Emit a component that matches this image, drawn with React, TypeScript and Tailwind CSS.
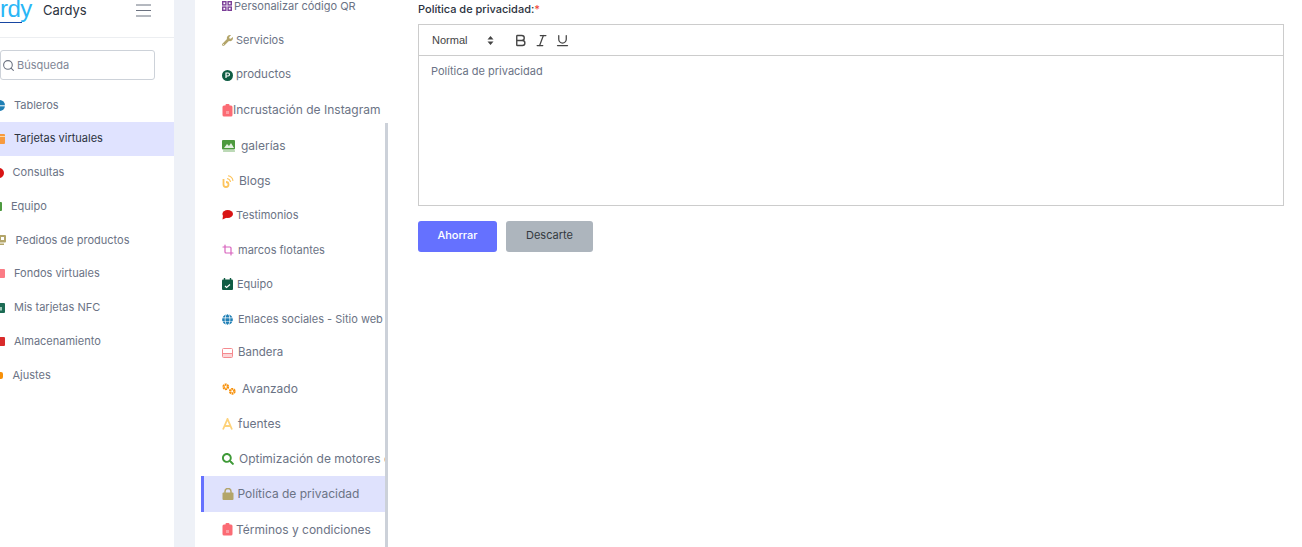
import { Search, Crop, Bold, Italic, Underline } from 'lucide-react'
import { FaGlobe, FaSearch, FaWrench } from 'react-icons/fa'
import type { ReactNode } from 'react'

const FONT = "font-['Inter','Open_Sans',sans-serif]"

const MAIN_NAV: { label: string; icon: ReactNode; iconBox: string; textGap: string; rowH: string; active?: boolean }[] = [
  {
    label: 'Tableros',
    icon: (
      <svg width="11" height="11" viewBox="0 0 11 11" className="shrink-0">
        <circle cx="5.5" cy="5.5" r="5.5" fill="#1f7fb5" />
        <path d="M0 5.8h11" stroke="#fff" strokeWidth="1" />
      </svg>
    ),
    iconBox: 'w-[5px]',
    textGap: 'ml-[9px]',
    rowH: 'h-[33px]',
  },
  {
    label: 'Tarjetas virtuales',
    icon: (
      <svg width="11" height="11" viewBox="0 0 11 11" className="shrink-0">
        <rect y="1" width="11" height="10" rx="1" fill="#f79a3e" />
        <path d="M0 3.5h11" stroke="#fdd9a8" strokeWidth="1" />
      </svg>
    ),
    iconBox: 'w-[5px]',
    textGap: 'ml-[9px]',
    rowH: 'h-[34px]',
    active: true,
  },
  {
    label: 'Consultas',
    icon: <span className="block h-[10px] w-[10px] shrink-0 rounded-full bg-[#d91414]" />,
    iconBox: 'w-[4px]',
    textGap: 'ml-[8.5px]',
    rowH: 'h-[34px]',
  },
  {
    label: 'Equipo',
    icon: <span className="block h-[9px] w-[9px] shrink-0 rounded-[1px] bg-[#4d9a3f]" />,
    iconBox: 'w-[2px]',
    textGap: 'ml-[9px]',
    rowH: 'h-[34px]',
  },
  {
    label: 'Pedidos de productos',
    icon: (
      <svg width="13" height="10" viewBox="0 0 13 10" className="shrink-0">
        <rect width="13" height="7.5" rx="1" fill="#b3a56a" />
        <rect x="8" y="2" width="3" height="3" fill="#fff" />
        <rect x="1" y="8.5" width="10" height="1.5" fill="#b3a56a" />
      </svg>
    ),
    iconBox: 'w-[6px]',
    textGap: 'ml-[9.5px]',
    rowH: 'h-[33px]',
  },
  {
    label: 'Fondos virtuales',
    icon: <span className="block h-[9px] w-[10px] shrink-0 rounded-[1px] bg-[#fb7c85]" />,
    iconBox: 'w-[5px]',
    textGap: 'ml-[9px]',
    rowH: 'h-[34px]',
  },
  {
    label: 'Mis tarjetas NFC',
    icon: (
      <svg width="11" height="10" viewBox="0 0 11 10" className="shrink-0">
        <rect width="11" height="10" rx="1" fill="#1c6b54" />
        <rect x="3" y="4" width="5" height="3.5" fill="#9cc9b8" />
      </svg>
    ),
    iconBox: 'w-[5px]',
    textGap: 'ml-[9px]',
    rowH: 'h-[34px]',
  },
  {
    label: 'Almacenamiento',
    icon: (
      <svg width="11" height="9" viewBox="0 0 11 9" className="shrink-0">
        <rect width="11" height="9" rx="1" fill="#d92b2b" />
        <rect x="2" y="3" width="3" height="2" fill="#fff" />
      </svg>
    ),
    iconBox: 'w-[5px]',
    textGap: 'ml-[9px]',
    rowH: 'h-[34px]',
  },
  {
    label: 'Ajustes',
    icon: <span className="block h-[7px] w-[7px] shrink-0 rounded-[2px] bg-[#f79009]" />,
    iconBox: 'w-[3px]',
    textGap: 'ml-[9.5px]',
    rowH: 'h-[34px]',
  },
]

function ClipIcon() {
  return (
    <svg width="11" height="13" viewBox="0 0 11 13" className="shrink-0">
      <rect x="0.5" y="1.5" width="10" height="11" rx="1.5" fill="#fb6b74" />
      <rect x="3.5" y="0" width="4" height="3" rx="1" fill="#fb6b74" />
      <rect x="4" y="7" width="3" height="3" fill="#fff" opacity="0.35" />
    </svg>
  )
}

const SUB_NAV: { label: string; icon: ReactNode; box: string; h: string; size: string; active?: boolean }[] = [
  {
    label: 'Personalizar código QR',
    icon: (
      <svg width="10" height="10" viewBox="0 0 10 10" className="shrink-0" fill="none" stroke="#7b3f98" strokeWidth="1.4">
        <rect x="0.7" y="0.7" width="3.2" height="3.2" />
        <rect x="6.1" y="0.7" width="3.2" height="3.2" />
        <rect x="0.7" y="6.1" width="3.2" height="3.2" />
        <rect x="6.1" y="6.1" width="3.2" height="3.2" />
      </svg>
    ),
    box: 'w-[12px]',
    h: 'h-[34px]',
    size: 'text-[11px]',
  },
  {
    label: 'Servicios',
    icon: <FaWrench size={11} color="#b3a56a" className="shrink-0" />,
    box: 'w-[14px]',
    h: 'h-[34px]',
    size: 'text-[11px]',
  },
  {
    label: 'productos',
    icon: (
      <svg width="11" height="11" viewBox="0 0 11 11" className="shrink-0">
        <circle cx="5.5" cy="5.5" r="5.5" fill="#0f5c43" />
        <path d="M4 8V3h2a1.5 1.5 0 0 1 0 3H4" stroke="#fff" strokeWidth="1.2" fill="none" />
      </svg>
    ),
    box: 'w-[14px]',
    h: 'h-[36px]',
    size: 'text-[11.5px]',
  },
  { label: 'Incrustación de Instagram', icon: <ClipIcon />, box: 'w-[11px]', h: 'h-[34px]', size: 'text-[12px]' },
  {
    label: 'galerías',
    icon: (
      <svg width="14" height="12" viewBox="0 0 14 12" className="shrink-0">
        <rect y="0" width="13" height="9.5" rx="1" fill="#4d9a3f" />
        <path d="M2 8l3-4 2 2 2-3 3 5z" fill="#fff" opacity="0.85" />
        <rect x="1" y="10.3" width="12" height="1.5" rx="0.5" fill="#a6cd9f" />
      </svg>
    ),
    box: 'w-[19px]',
    h: 'h-[38px]',
    size: 'text-[12px]',
  },
  {
    label: 'Blogs',
    icon: (
      <svg width="12" height="13" viewBox="0 0 12 13" className="shrink-0" fill="none" stroke="#fdc45c">
        <path d="M1.5 4v5.5a2.5 2.5 0 1 0 2.5-2.5" strokeWidth="1.8" />
        <path d="M5 3.5a4 4 0 0 1 3.5 3.5" strokeWidth="1.1" />
        <path d="M6 0.8a6 6 0 0 1 5 5" strokeWidth="1.1" />
      </svg>
    ),
    box: 'w-[17px]',
    h: 'h-[32px]',
    size: 'text-[12px]',
  },
  {
    label: 'Testimonios',
    icon: (
      <svg width="11" height="10" viewBox="0 0 11 10" className="shrink-0">
        <ellipse cx="5.7" cy="4" rx="5.3" ry="4" fill="#d91414" />
        <path d="M1 5.5L0.5 9.5 5 7.5z" fill="#d91414" />
      </svg>
    ),
    box: 'w-[14px]',
    h: 'h-[36px]',
    size: 'text-[11px]',
  },
  {
    label: 'marcos flotantes',
    icon: <Crop size={12} strokeWidth={2.4} className="shrink-0 text-[#d863bd]" />,
    box: 'w-[16px]',
    h: 'h-[34px]',
    size: 'text-[11px]',
  },
  {
    label: 'Equipo',
    icon: (
      <svg width="11" height="12" viewBox="0 0 11 12" className="shrink-0">
        <rect y="1.5" width="11" height="10.5" rx="1" fill="#0f5c43" />
        <path d="M2.5 0v3M8.5 0v3" stroke="#0f5c43" strokeWidth="1.4" />
        <path d="M3 8l1.6 1.4L8 6.5" stroke="#fff" strokeWidth="1.2" fill="none" />
      </svg>
    ),
    box: 'w-[15px]',
    h: 'h-[34px]',
    size: 'text-[11px]',
  },
  {
    label: 'Enlaces sociales - Sitio web',
    icon: <FaGlobe size={11} color="#1f7fb5" className="shrink-0" />,
    box: 'w-[16px]',
    h: 'h-[36px]',
    size: 'text-[11px]',
  },
  {
    label: 'Bandera',
    icon: (
      <svg width="11" height="10" viewBox="0 0 11 10" className="shrink-0">
        <rect x="0.5" y="0.5" width="10" height="9" rx="1" fill="none" stroke="#f58a8f" />
        <rect x="1" y="5" width="9" height="4" fill="#fbd5d7" />
        <rect x="1" y="5" width="9" height="1" fill="#f58a8f" />
      </svg>
    ),
    box: 'w-[16px]',
    h: 'h-[32px]',
    size: 'text-[11.5px]',
  },
  {
    label: 'Avanzado',
    icon: (
      <svg width="14" height="12" viewBox="0 0 14 12" className="shrink-0">
        <circle cx="3.8" cy="3.8" r="2.2" fill="none" stroke="#f79009" strokeWidth="2.4" strokeDasharray="1.6 0.5" />
        <circle cx="10.3" cy="8.3" r="2.2" fill="none" stroke="#f79009" strokeWidth="2.4" strokeDasharray="1.6 0.5" />
      </svg>
    ),
    box: 'w-[20px]',
    h: 'h-[40px]',
    size: 'text-[12px]',
  },
  {
    label: 'fuentes',
    icon: (
      <svg width="11" height="12" viewBox="0 0 11 12" className="shrink-0">
        <path d="M1 11.5L5.5 1 10 11.5M3 8h5" stroke="#fdd27a" strokeWidth="1.8" fill="none" />
      </svg>
    ),
    box: 'w-[16px]',
    h: 'h-[30px]',
    size: 'text-[12px]',
  },
  {
    label: 'Optimización de motores de búsqueda',
    icon: <FaSearch size={12} color="#3f9a38" className="shrink-0" />,
    box: 'w-[17px]',
    h: 'h-[37px] pt-[2px]',
    size: 'text-[12px]',
  },
  {
    label: 'Política de privacidad',
    icon: (
      <svg width="12" height="12" viewBox="0 0 12 12" className="shrink-0">
        <path d="M3 5V3.5a3 3 0 0 1 6 0V5" stroke="#b3a56a" strokeWidth="1.5" fill="none" />
        <rect x="0.5" y="4.5" width="11" height="7.5" rx="1" fill="#b3a56a" />
      </svg>
    ),
    box: 'w-[15.5px]',
    h: 'h-[36px]',
    size: 'text-[12px]',
    active: true,
  },
  { label: 'Términos y condiciones', icon: <ClipIcon />, box: 'w-[14px]', h: 'h-[35px]', size: 'text-[12px]' },
]

export default function App() {
  return (
    <div className={`flex h-[547px] w-[1302px] overflow-hidden bg-white ${FONT}`}>
      <aside className="w-[174px] shrink-0 overflow-hidden">
        <div className="flex h-[38px] items-start border-b border-[#eceef1]">
          <div className="h-[37px] w-[43px] shrink-0 overflow-hidden">
            <div className="h-[23px] w-[22px] whitespace-nowrap border-b border-[#1746a2] font-['Liberation_Sans',sans-serif] text-[24px] leading-[18px] tracking-[-0.5px] text-[#29b6f6]">
              rdy
            </div>
          </div>
          <span className="text-[13px] leading-[20px] text-[#2b3240]">Cardys</span>
          <svg width="15" height="13" viewBox="0 0 15 13" className="ml-[49px] mt-[4px] shrink-0" stroke="#6b7280" strokeWidth="1">
            <path d="M0 1h15M0 6.5h15M0 12h15" />
          </svg>
        </div>
        <div className="mt-[12px] flex h-[30px] w-[155px] items-center rounded-[3px] border border-[#cdd2d9]">
          <Search size={13} className="ml-[1px] text-[#6b7280]" />
          <span className="ml-[2px] text-[11px] text-[#7f8796]">Búsqueda</span>
        </div>
        <nav className="mt-[9px]">
          {MAIN_NAV.map((item) => (
            <div
              key={item.label}
              className={`flex items-center pb-[1px] ${item.rowH} ${item.active ? 'bg-[#e0e3ff] text-[#2b3240]' : 'text-[#6b7385]'}`}
            >
              <span className={`flex justify-end ${item.iconBox}`}>{item.icon}</span>
              <span className={`${item.textGap} whitespace-nowrap text-[11px]`}>{item.label}</span>
            </div>
          ))}
        </nav>
      </aside>
      <div className="w-[27px] shrink-0">
        <div className="h-full w-[21px] bg-[#eef1f7]" />
      </div>
      <section className="relative w-[187px] shrink-0 overflow-hidden">
        <div className="-mt-[11px] w-[184px] overflow-hidden">
          {SUB_NAV.map((item) => (
            <div
              key={item.label}
              className={`flex items-center whitespace-nowrap text-[#6b7385] ${item.h} ${
                item.active ? 'border-l-[3px] border-[#6571ff] bg-[#dfe2fd] pl-[18px]' : 'pl-[21px]'
              }`}
            >
              <span className={`flex shrink-0 items-center ${item.box}`}>{item.icon}</span>
              <span className={item.size}>{item.label}</span>
            </div>
          ))}
        </div>
        <div className="absolute bottom-0 right-0 top-[123px] w-[3px] bg-[#ccd1d9]" />
      </section>
      <main className="ml-[30px] w-[866px] shrink-0 pt-[2px]">
        <label className="block text-[11px] font-medium leading-[14px] text-[#2b3240]">
          Política de privacidad:<span className="text-[#f04438]">*</span>
        </label>
        <div className="mt-[8px] border border-[#cccccc]">
          <div className="flex h-[31px] items-center border-b border-[#cccccc] pl-[13px] text-[#444]">
            <span className="font-['Liberation_Sans',sans-serif] text-[11px]">Normal</span>
            <svg width="7" height="9" viewBox="0 0 7 9" className="ml-[20px] shrink-0" fill="#444">
              <path d="M3.5 0L6.5 3.5H0.5zM3.5 9L0.5 5.5H6.5z" />
            </svg>
            <Bold size={15} strokeWidth={2.2} className="ml-[19px]" />
            <Italic size={15} strokeWidth={2} className="ml-[6px]" />
            <Underline size={15} strokeWidth={2} className="ml-[6px]" />
          </div>
          <div className="h-[149px] px-[12px] pt-[8px] text-[11px] leading-[14px] text-[#6b7385]">Política de privacidad</div>
        </div>
        <div className="mt-[15px] flex gap-[9px]">
          <button type="button" className="h-[31px] w-[79px] rounded-[3px] bg-[#6571ff] pb-[2px] text-[11px] font-medium text-white">
            Ahorrar
          </button>
          <button type="button" className="h-[31px] w-[87px] rounded-[3px] bg-[#adb5bd] pb-[2px] text-[11px] text-[#343a40]">
            Descarte
          </button>
        </div>
      </main>
    </div>
  )
}
